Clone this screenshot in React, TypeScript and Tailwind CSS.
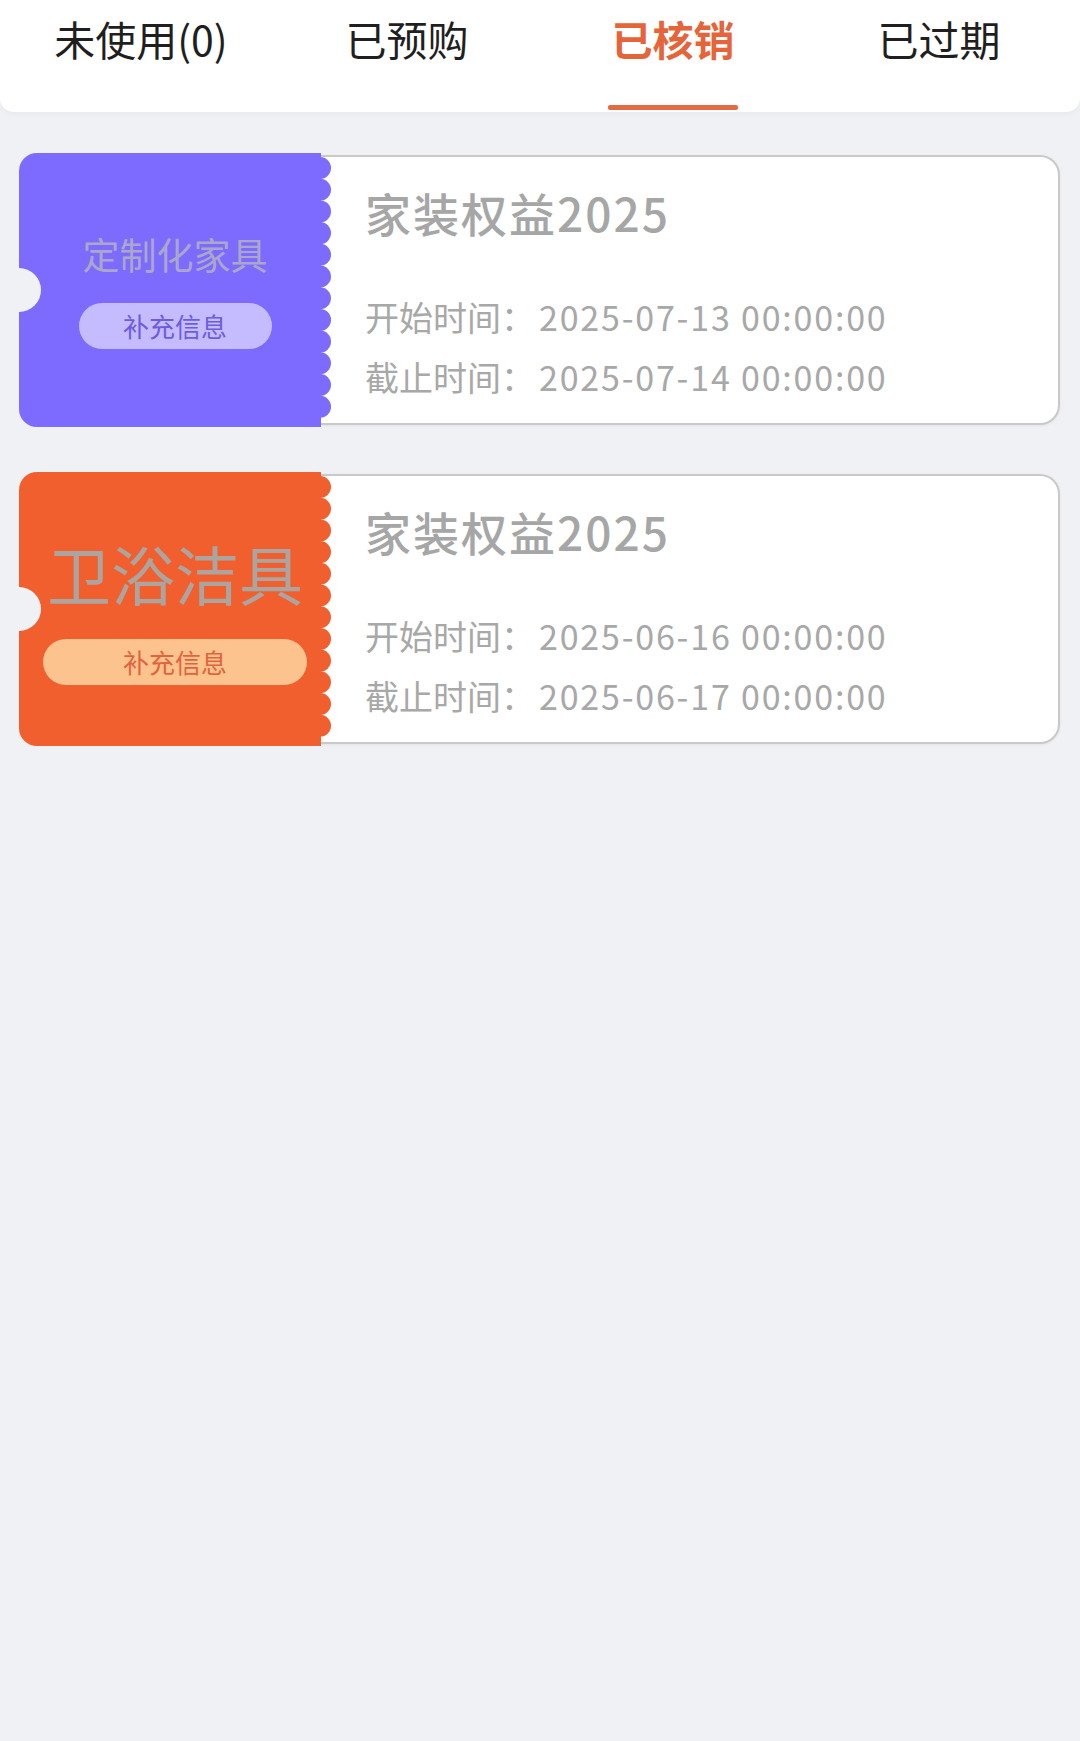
import React from 'react';

interface Coupon {
  category: string;
  title: string;
  start: string;
  end: string;
  stubBg: string;
  stubText: string;
  stubSize: string;
  btnBg: string;
  btnText: string;
  fill: string;
}

const tabs = ['未使用(0)', '已预购', '已核销', '已过期'];
const activeTab = 2;

const coupons: Coupon[] = [
  {
    category: '定制化家具',
    title: '家装权益2025',
    start: '2025-07-13 00:00:00',
    end: '2025-07-14 00:00:00',
    stubBg: 'bg-[#7c6bfe]',
    stubText: 'text-[#aba7c9] text-[37px] leading-[44px]',
    stubSize: 'mt-[27px]',
    btnBg: 'bg-[#c5bcff]',
    btnText: 'text-[#6c5de0]',
    fill: '#7c6bfe',
  },
  {
    category: '卫浴洁具',
    title: '家装权益2025',
    start: '2025-06-16 00:00:00',
    end: '2025-06-17 00:00:00',
    stubBg: 'bg-[#f25f2e]',
    stubText: 'text-[#aca49f] text-[64px] leading-[76px]',
    stubSize: 'mt-[29px]',
    btnBg: 'bg-[#fdc38f]',
    btnText: 'text-[#e2643d]',
    fill: '#f25f2e',
  },
];

// scalloped edge on the right of the stub
const Scallops: React.FC<{ fill: string }> = ({ fill }) => (
  <svg
    className="absolute top-0 right-[-11px]"
    width="12"
    height="274"
    viewBox="0 0 12 274"
  >
    {Array.from({ length: 12 }).map((_, i) => (
      <circle key={i} cx="0" cy={15 + i * 21.7} r="11" fill={fill} />
    ))}
  </svg>
);

const CouponCard: React.FC<{ coupon: Coupon }> = ({ coupon }) => (
  <div className="flex h-[274px]">
    <div
      className={`relative z-10 w-[302px] shrink-0 rounded-l-[18px] ${coupon.stubBg} flex items-center justify-center pl-[10px]`}
    >
      <div className="absolute left-[-22px] top-1/2 -translate-y-1/2 w-[44px] h-[44px] rounded-full bg-[#f0f1f5]" />
      <div className="flex flex-col items-stretch">
        <div className={`whitespace-nowrap text-center ${coupon.stubText}`}>{coupon.category}</div>
        <div
          className={`${coupon.stubSize} mx-[-4px] h-[46px] rounded-full ${coupon.btnBg} ${coupon.btnText} flex items-center justify-center text-[26px]`}
        >
          补充信息
        </div>
      </div>
      <Scallops fill={coupon.fill} />
    </div>
    <div className="flex-1 my-[2px] bg-white border-2 border-l-0 border-[#c9c9c9] rounded-r-[20px] pl-[44px] pt-[28px] shadow-[0_1px_3px_rgba(0,0,0,0.06)]">
      <div className="text-[46px] leading-[55px] font-medium tracking-[2px] text-[#a6a6a6]">{coupon.title}</div>
      <div className="mt-[47px] text-[34px] leading-[60px] text-[#a8a8a8] whitespace-nowrap">
        <div>
          开始时间：<span className="ml-[4px] tracking-[1.8px]">{coupon.start}</span>
        </div>
        <div>
          截止时间：<span className="ml-[4px] tracking-[1.8px]">{coupon.end}</span>
        </div>
      </div>
    </div>
  </div>
);

export default function App() {
  return (
    <div
      className="min-h-[1741px] bg-[#f0f1f5]"
      style={{ fontFamily: '"Noto Sans CJK SC", "Noto Sans", sans-serif' }}
    >
      <div className="h-[112px] bg-white rounded-b-[14px] shadow-[0_2px_6px_rgba(0,0,0,0.04)] flex px-[8px]">
        {tabs.map((tab, i) => (
          <div key={tab} className="flex-1 flex flex-col items-center justify-between pt-[12px] pb-[2px]">
            <div
              className={
                i === activeTab
                  ? 'text-[41px] leading-[52px] font-bold text-[#e5643a]'
                  : 'text-[41px] leading-[52px] text-[#1f1f1f]'
              }
            >
              {tab}
            </div>
            {i === activeTab ? (
              <div className="w-[130px] h-[5px] rounded-[2px] bg-[#e26a45]" />
            ) : (
              <div className="h-[5px]" />
            )}
          </div>
        ))}
      </div>
      <div className="pt-[41px] pl-[19px] pr-[20px] flex flex-col gap-[45px]">
        {coupons.map((c, i) => (
          <CouponCard key={i} coupon={c} />
        ))}
      </div>
    </div>
  );
}
